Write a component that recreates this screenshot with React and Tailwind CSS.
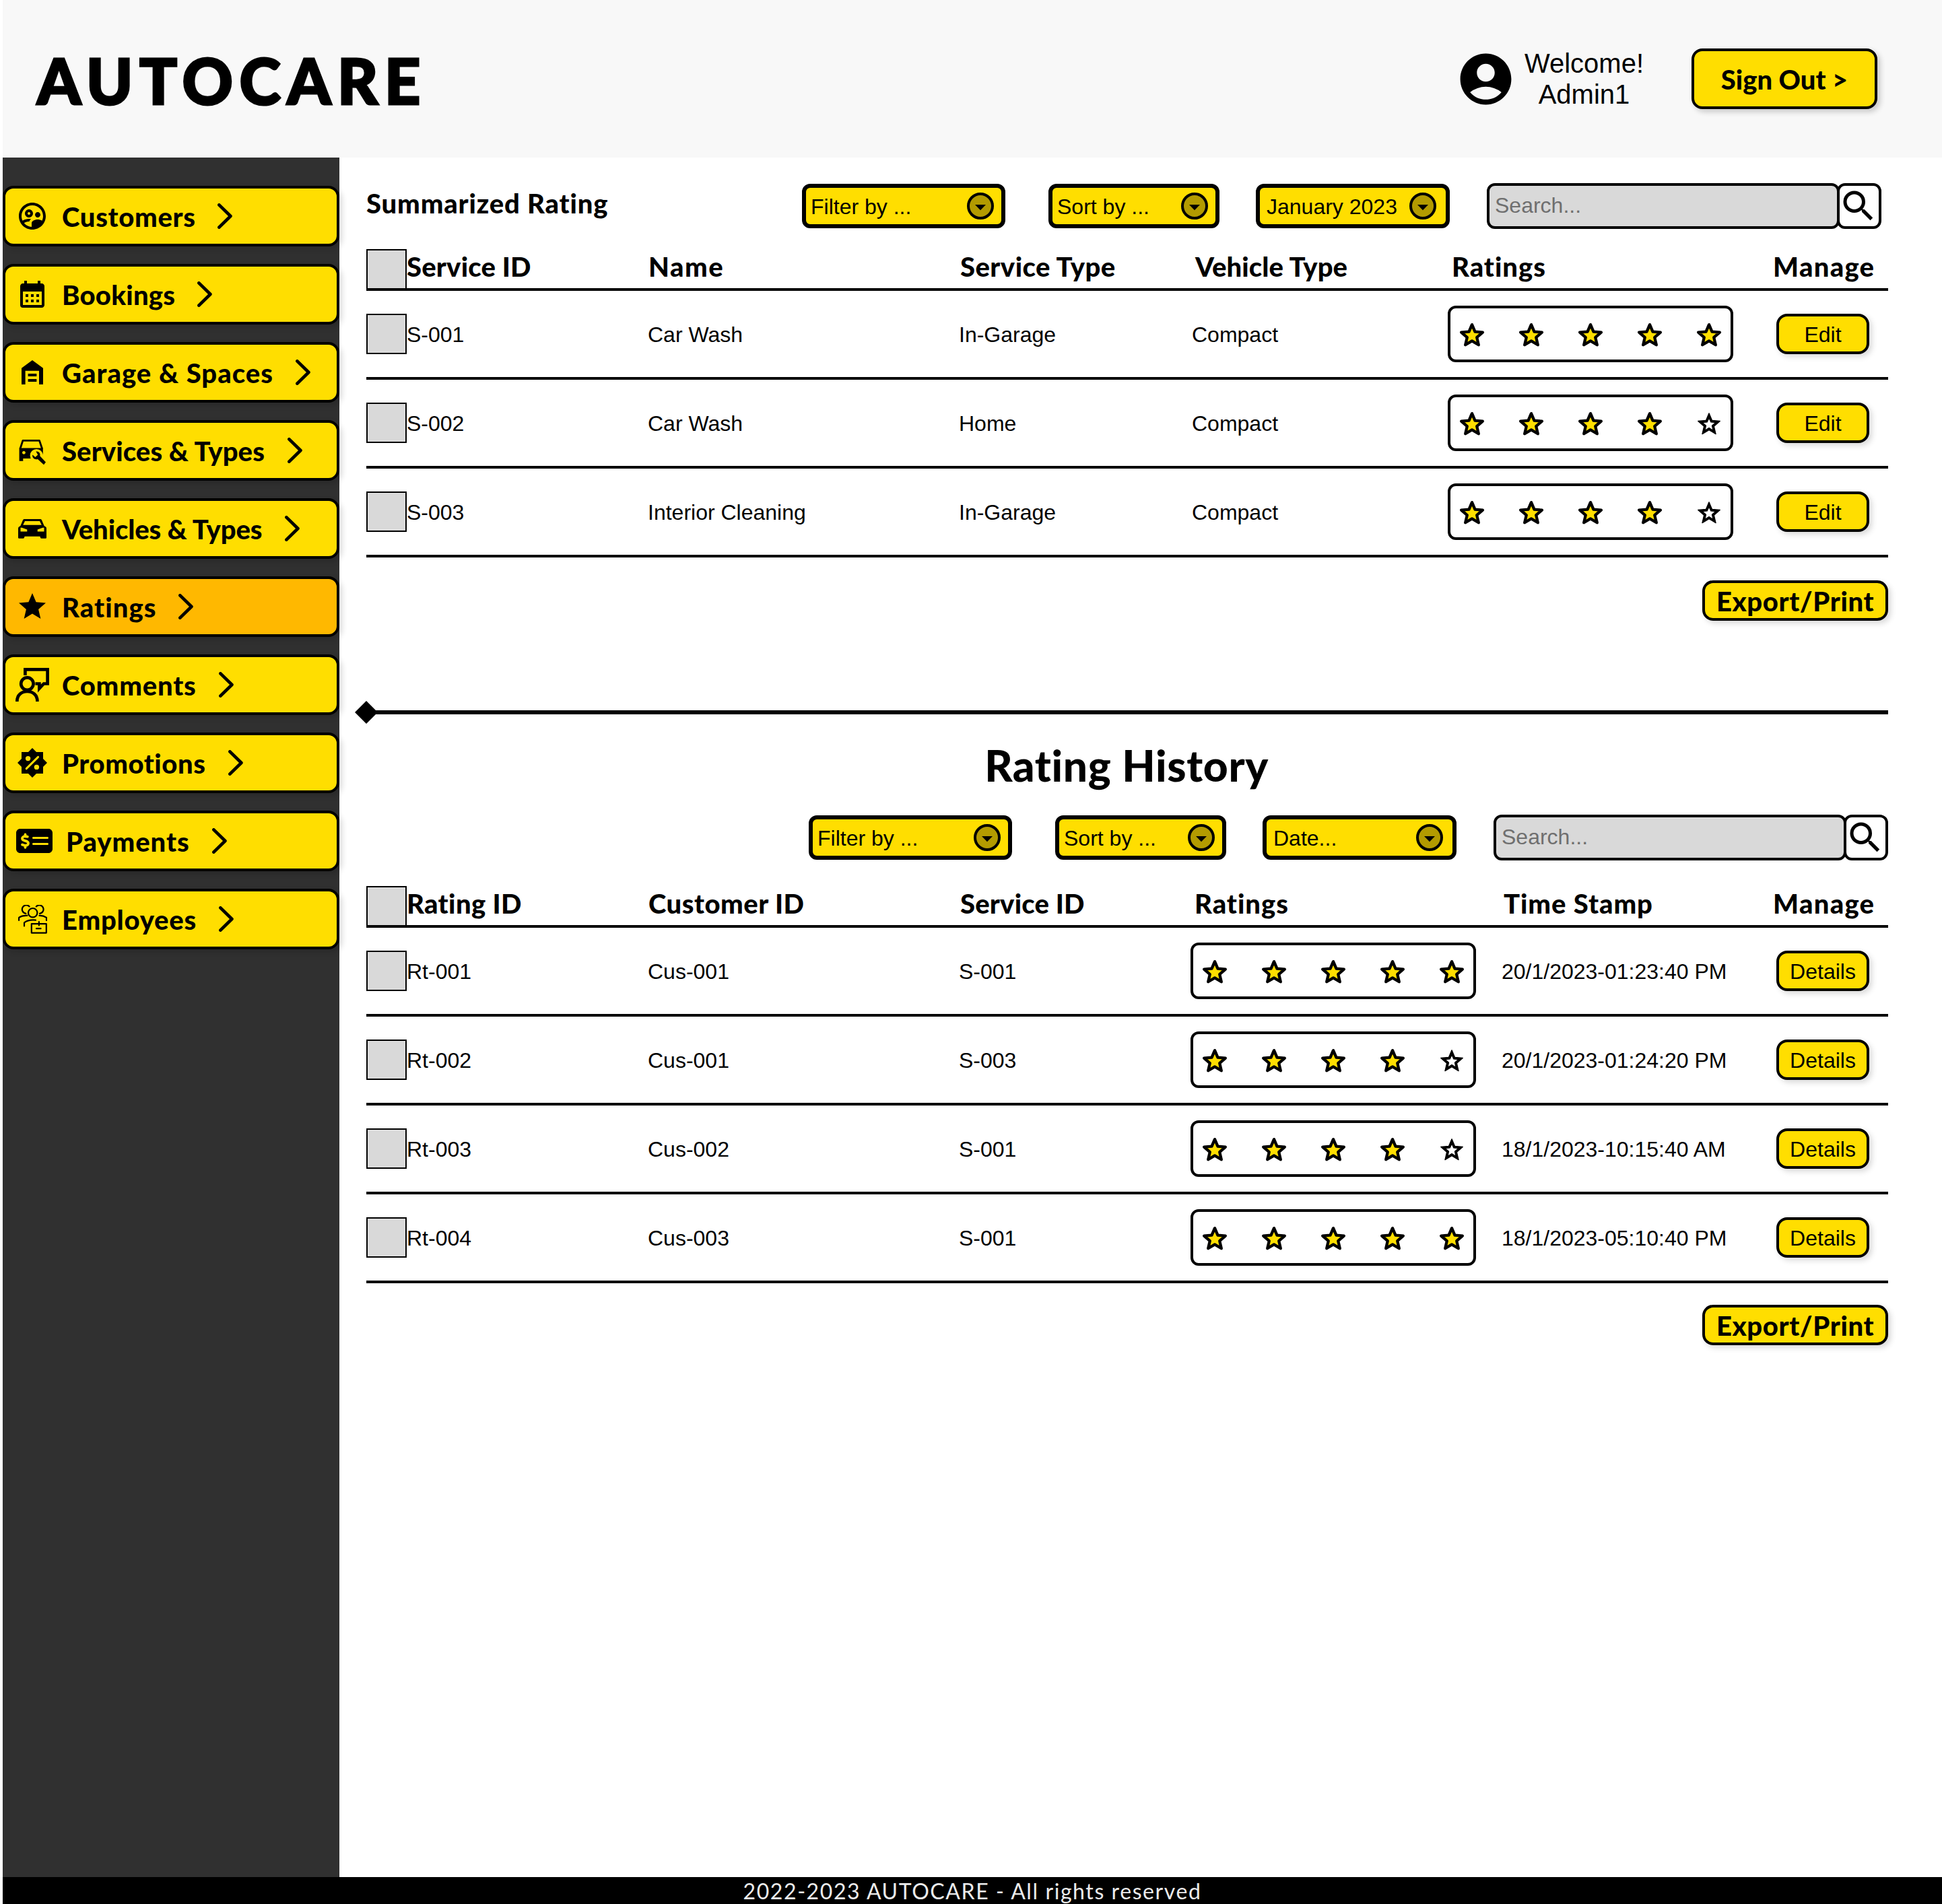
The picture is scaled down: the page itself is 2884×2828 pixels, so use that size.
import {
  MdOutlineSupervisedUserCircle,
  MdCalendarMonth,
  MdStar,
  MdAccountCircle,
  MdSearch,
} from "react-icons/md";
import { FaMoneyCheckDollar } from "react-icons/fa6";

function GarageIcon() {
  return (
    <svg width="32" height="36" viewBox="0 0 32 36" fill="#000">
      <path d="M16 0 32 11.7V36H26V15.7H5.6V36H0V11.7Z" />
      <path d="M9.6 20H22.4V24H9.6ZM9.6 28H22.4V32H9.6Z" />
    </svg>
  );
}

function CarServiceIcon() {
  return (
    <svg width="40" height="38" viewBox="0 0 40 38" className="mt-[6px]" overflow="visible">
      <path d="M2 13.5 5.9 1.4H30.5L34.6 13.5" fill="none" stroke="#000" strokeWidth="2.8" strokeLinejoin="round" />
      <path d="M.6 12.4H35.8V22L30 17.5 24 15.5 19.5 19.5 18 28H6.3V31.8H.6Z" fill="#000" />
      <circle cx="7.4" cy="19.3" r="2.4" fill="#ffde00" />
      <circle cx="26.2" cy="23.6" r="9.6" fill="#ffde00" />
      <path d="M22.2 19.6 26 23.4" stroke="#ffde00" strokeWidth="4" />
      <path
        d="M25.4 17.6C29.6 17 32.4 20.2 31.3 24.3L40 33.6 37 37.2 28 28.9C23.6 30.6 19.3 27 20.3 22.6L24.4 26 28.2 22.6Z"
        fill="#000"
      />
    </svg>
  );
}

function CarIcon() {
  return (
    <svg width="42" height="29" viewBox="0 0 42 29">
      <path
        fillRule="evenodd"
        fill="#000"
        d="M9.3 0H32.7Q34.3 0 35 1.4L38.6 10 41.2 11.8Q42 12.6 42 14V27.5Q42 28.8 40.7 28.8H34.6Q33.4 28.8 33 27.6L32.4 25.8H9.6L9 27.6Q8.6 28.8 7.4 28.8H1.3Q0 28.8 0 27.5V14Q0 12.6 .8 11.8L3.4 10 7 1.4Q7.7 0 9.3 0ZM10 3 7.2 8.8H34.8L32 3ZM3.5 12.8V18.6H13.3V15.6L5.5 12.8ZM38.5 12.8V18.6H28.7V15.6L36.5 12.8Z"
      />
    </svg>
  );
}

function CommentIcon() {
  return (
    <svg width="50" height="50" viewBox="0 0 50 50" fill="none" stroke="#000" strokeWidth="4.7" className="-mx-px">
      <path d="M14.4 11V2.4H47.6V23.5H42L35.4 30.5V23.5H29.5" />
      <circle cx="17.4" cy="23.6" r="9.2" />
      <path d="M2.4 50V49.3C2.4 40.5 9 35 17.4 35S32.4 40.5 32.4 49.3V50" />
    </svg>
  );
}

function PromotionIcon() {
  return (
    <svg width="44" height="44" viewBox="-22 -22 44 44">
      <path d="M-16-16H16V16H-16Z" fill="#000" />
      <path d="M0-22 22 0 0 22-22 0Z" fill="#000" />
      <circle cx="-6.4" cy="-6.4" r="3.7" fill="#ffde00" />
      <circle cx="6.4" cy="6.4" r="3.7" fill="#ffde00" />
      <path d="M8.6-8.6-8.8 8.6" stroke="#ffde00" strokeWidth="3" strokeLinecap="round" />
    </svg>
  );
}

function EmployeesIcon() {
  return (
    <svg width="43" height="43" viewBox="0 0 43 43" fill="none" stroke="#000" strokeWidth="2.2" strokeLinecap="round" strokeLinejoin="round">
      <circle cx="21.7" cy="11.7" r="6.7" />
      <path d="M16.6 2.4A6.2 6.2 0 1 0 11.4 12.8" />
      <path d="M26.8 2.4A6.2 6.2 0 1 1 32 12.8" />
      <path d="M1.1 23V18.8C4 16.8 8.5 15.6 13.4 15.9" />
      <path d="M42 23V18.8C39 16.8 35.5 15.8 31.5 15.9" />
      <path d="M9 31.5V26.4C13.5 23.2 19.5 21.9 26 22.7" />
      <path d="M19.8 28.2H41.8V41.6H19.8ZM30.9 25V30.4M27 35.2H33.6" />
    </svg>
  );
}

function Chevron() {
  return (
    <svg width="22" height="38" viewBox="0 0 22 38" fill="none" stroke="#000" strokeWidth="4.7" strokeLinecap="round" strokeLinejoin="round" className="shrink-0">
      <path d="M2.4 2.4 19.4 19 2.4 35.6" />
    </svg>
  );
}

const NAV = [
  { label: "Customers", icon: <MdOutlineSupervisedUserCircle />, text: "w-[231px] tracking-[0.7px]" },
  { label: "Bookings", icon: <MdCalendarMonth />, text: "w-[201px] tracking-[0.25px]" },
  { label: "Garage & Spaces", icon: <GarageIcon />, text: "w-[347px] tracking-[1.05px]" },
  { label: "Services & Types", icon: <CarServiceIcon />, text: "w-[335px] tracking-[0.1px]" },
  { label: "Vehicles & Types", icon: <CarIcon />, text: "w-[331px] tracking-[-0.1px]" },
  { label: "Ratings", icon: <MdStar />, text: "w-[173px] tracking-[1.1px]", active: true },
  { label: "Comments", icon: <CommentIcon />, text: "w-[233px] tracking-[0.8px]" },
  { label: "Promotions", icon: <PromotionIcon />, text: "w-[247px] tracking-[0.55px]" },
  { label: "Payments", icon: <FaMoneyCheckDollar className="h-[48px] w-[54px]" />, text: "w-[217px] tracking-[0.95px]" },
  { label: "Employees", icon: <EmployeesIcon />, text: "w-[233px] tracking-[0.8px]" },
];

function Sidebar() {
  return (
    <nav className="flex w-[500px] flex-col gap-[26px] bg-[#303030] pt-[42px]">
      {NAV.map((item) => (
        <button
          key={item.label}
          className={`flex h-[90px] w-full items-center rounded-2xl border-4 border-black pl-4 shadow-[4px_4px_8px_rgba(0,0,0,0.15)] ${item.active ? "bg-[#ffb800]" : "bg-[#ffde00]"}`}
        >
          <span className="mr-5 flex h-12 min-w-12 items-center justify-center text-[48px]">{item.icon}</span>
          <span className={`shrink-0 pt-[2px] text-left font-['Lato',sans-serif] text-[40px] leading-[48px] font-black whitespace-nowrap ${item.text}`}>
            {item.label}
          </span>
          <Chevron />
        </button>
      ))}
    </nav>
  );
}

function Header() {
  return (
    <header className="flex h-[234px] items-center bg-[#f8f8f8] pr-24 pl-[51px]">
      <h1 className="pt-[5px] font-['Lato',sans-serif] text-[93px] leading-none font-black tracking-[9.5px] [-webkit-text-stroke:3px_#000]">AUTOCARE</h1>
      <MdAccountCircle className="ml-auto text-[91px]" />
      <p className="ml-[12px] text-center text-[40px] leading-[46px]">
        Welcome!
        <br />
        Admin1
      </p>
      <button className="ml-[71px] h-[90px] w-[276px] rounded-2xl border-4 border-black bg-[#ffde00] pt-[2px] font-['Lato',sans-serif] text-[40px] leading-[48px] font-black shadow-[4px_4px_8px_rgba(0,0,0,0.2)]">
        Sign Out &gt;
      </button>
    </header>
  );
}

function Select({ label, className }) {
  return (
    <button className={`flex h-[66px] items-center justify-between rounded-xl border-[6px] border-black bg-[#ffde00] ${className}`}>
      <span className="pt-[2px]">{label}</span>
      <svg width="40" height="40" viewBox="0 0 40 40">
        <circle cx="20" cy="20" r="18" fill="#b39b00" stroke="#000" strokeWidth="4" />
        <path d="M12 18H28L20 26.2Z" fill="#000" />
      </svg>
    </button>
  );
}

function Toolbar({ date, title, className }) {
  return (
    <div className={`flex h-[68px] items-center ${className}`}>
      {title && <h2 className="-mt-[8px] font-['Lato',sans-serif] text-[40px] leading-[48px] font-black tracking-[0.85px]">{title}</h2>}
      <Select label="Filter by ..." className="ml-auto w-[302px] pr-[11px] pl-[7px]" />
      <Select label="Sort by ..." className="ml-16 w-[254px] pr-[11px] pl-[7px]" />
      <Select label={date} className="ml-[54px] w-[288px] pr-[14px] pl-[10px]" />
      <div className="z-10 ml-[55px] flex h-[68px] w-[524px] items-center rounded-xl border-4 border-black bg-[#d9d9d9] pb-[2px] pl-2 text-[#6f6f6f]">
        Search...
      </div>
      <button className="-ml-1 flex h-[68px] w-[66px] items-center justify-center rounded-xl border-4 border-black bg-white pr-[3px]">
        <MdSearch className="shrink-0 text-[60px]" />
      </button>
    </div>
  );
}

function Checkbox() {
  return <span className="block h-[60px] w-[60px] border-2 border-black bg-[#d9d9d9]" />;
}

function FullStar() {
  return (
    <svg width="40" height="40" viewBox="-0.6 -0.6 25.2 25.2" fill="#ffde00" stroke="#000" strokeWidth="2.7" strokeLinejoin="round">
      <path d="M12 17.27 18.18 21l-1.64-7.03L22 9.24l-7.19-.61L12 2 9.19 8.63 2 9.24l5.46 4.73L5.82 21z" />
    </svg>
  );
}

function EmptyStar() {
  return (
    <svg width="40" height="40" viewBox="-0.3 -0.3 24.6 24.6" fill="#000" stroke="#000" strokeWidth="0.8" strokeLinejoin="round">
      <path d="M12 15.39 8.24 17.66 9.23 13.38 5.91 10.5 10.29 10.13 12 6.09 13.71 10.13 18.09 10.5 14.77 13.38 15.76 17.66ZM22 9.24 14.81 8.63 12 2 9.19 8.63 2 9.24 7.45 13.97 5.82 21 12 17.27 18.18 21 16.54 13.97Z" fillRule="evenodd" />
    </svg>
  );
}

function Stars({ value }) {
  return (
    <div className="flex h-[84px] w-[424px] items-center justify-between rounded-xl border-4 border-black px-3 pt-[3px]">
      {[1, 2, 3, 4, 5].map((n) => (n <= value ? <FullStar key={n} /> : <EmptyStar key={n} />))}
    </div>
  );
}

function Table({ headCols, rowCols, head, rows, action }) {
  return (
    <div>
      <div className={`grid h-[62px] items-start border-b-4 border-black font-['Lato',sans-serif] text-[40px] leading-[52px] font-black whitespace-nowrap ${headCols}`}>
        <Checkbox />
        {head.map(([text, tracking]) => (
          <span key={text} className={tracking}>
            {text}
          </span>
        ))}
      </div>
      {rows.map((cells) => (
        <div key={cells[0]} className={`grid h-[132px] items-center border-b-4 border-black whitespace-nowrap ${rowCols}`}>
          <Checkbox />
          {cells.map((cell, i) =>
            typeof cell === "number" ? (
              <Stars key={i} value={cell} />
            ) : (
              <span key={i} className="pt-[2px]">
                {cell}
              </span>
            ),
          )}
          <button className="h-[60px] w-[138px] rounded-2xl border-4 border-black bg-[#ffde00] pt-[2px] shadow-[4px_4px_8px_rgba(0,0,0,0.15)]">
            {action}
          </button>
        </div>
      ))}
    </div>
  );
}

function ExportButton({ className }) {
  return (
    <button className={`ml-auto block h-[60px] w-[276px] rounded-2xl border-4 border-black bg-[#ffde00] pt-[2px] font-['Lato',sans-serif] text-[40px] leading-[48px] font-black tracking-[0.6px] shadow-[4px_4px_8px_rgba(0,0,0,0.15)] ${className}`}>
      Export/Print
    </button>
  );
}

export default function App() {
  return (
    <div className="flex h-[2828px] w-[2884px] flex-col overflow-hidden bg-white pl-1 font-['Liberation_Sans',Arial,sans-serif] text-[32px] leading-[36px] text-black">
      <Header />
      <div className="flex flex-1">
        <Sidebar />
        <main className="w-[2300px] pt-[38px] pl-10">
          <Toolbar title="Summarized Rating" date="January 2023" className="pr-[10px]" />
          <div className="mt-[30px]">
            <Table
              headCols="grid-cols-[60px_359px_463px_349px_381px_477px_171px]"
              rowCols="grid-cols-[60px_358px_462px_346px_380px_488px_166px]"
              head={[
                ["Service ID", "tracking-[0.2px]"],
                ["Name", "tracking-[1.5px]"],
                ["Service Type", "tracking-[0.45px]"],
                ["Vehicle Type", "tracking-[0.1px]"],
                ["Ratings", "tracking-[1px]"],
                ["Manage", "tracking-[1.3px]"],
              ]}
              rows={[
                ["S-001", "Car Wash", "In-Garage", "Compact", 5],
                ["S-002", "Car Wash", "Home", "Compact", 4],
                ["S-003", "Interior Cleaning", "In-Garage", "Compact", 4],
              ]}
              action="Edit"
            />
          </div>
          <ExportButton className="mt-[34px]" />

          <div className="relative mt-[133px] h-[6px] bg-black">
            <span className="absolute -top-[9px] -left-3 h-6 w-6 rotate-45 bg-black" />
          </div>

          <h2 className="mt-[35px] pt-px pr-[2px] pb-px text-center font-['Lato',sans-serif] text-[64px] leading-[80px] font-black tracking-[0.65px]">Rating History</h2>
          <Toolbar date="Date..." className="mt-[32px]" />
          <div className="mt-[38px]">
            <Table
              headCols="grid-cols-[60px_359px_463px_348px_459px_400px_171px]"
              rowCols="grid-cols-[60px_358px_462px_344px_462px_408px_166px]"
              head={[
                ["Rating ID", "tracking-[0.4px]"],
                ["Customer ID", "tracking-[0.5px]"],
                ["Service ID", "tracking-[0.2px]"],
                ["Ratings", "tracking-[1px]"],
                ["Time Stamp", "tracking-[0.95px]"],
                ["Manage", "tracking-[1.3px]"],
              ]}
              rows={[
                ["Rt-001", "Cus-001", "S-001", 5, "20/1/2023-01:23:40 PM"],
                ["Rt-002", "Cus-001", "S-003", 4, "20/1/2023-01:24:20 PM"],
                ["Rt-003", "Cus-002", "S-001", 4, "18/1/2023-10:15:40 AM"],
                ["Rt-004", "Cus-003", "S-001", 5, "18/1/2023-05:10:40 PM"],
              ]}
              action="Details"
            />
          </div>
          <ExportButton className="mt-8" />
        </main>
      </div>
      <footer className="flex h-10 items-center justify-center bg-black pt-px font-['Lato',sans-serif] tracking-[1.58px] text-[#ebebeb]">
        2022-2023 AUTOCARE - All rights reserved
      </footer>
    </div>
  );
}
